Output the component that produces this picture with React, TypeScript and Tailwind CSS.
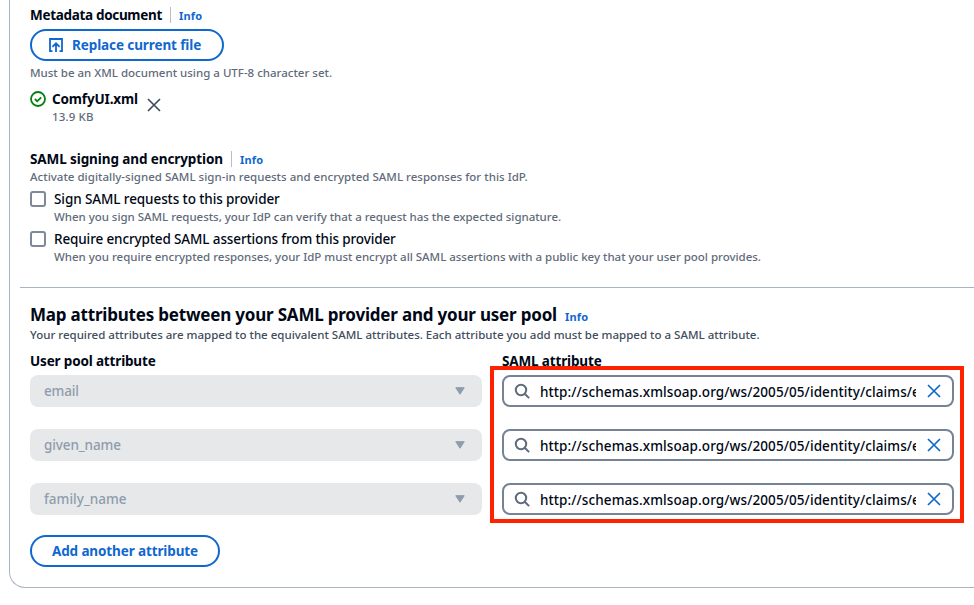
import type { ReactNode } from "react";

function CloseIcon({ className }: { className: string }) {
  return (
    <svg viewBox="0 0 16 16" className={className} fill="none" stroke="currentColor">
      <path d="M2 2l12 12M14 2L2 14" />
    </svg>
  );
}

function Checkbox({ label, hint, labelClass, hintClass }: { label: string; hint: string; labelClass: string; hintClass: string }) {
  return (
    <div className="flex h-10 gap-2">
      <span className="mt-0.5 size-4 shrink-0 rounded-[3px] border-2 border-[#7d8998] bg-white" />
      <div>
        <div className={`h-5 text-[13.5px] leading-5 font-medium text-[#000716] ${labelClass}`}>{label}</div>
        <div className={`h-4 text-[11.5px] leading-4 font-medium text-[#5f6b7a] ${hintClass}`}>{hint}</div>
      </div>
    </div>
  );
}

function Info({ className = "" }: { className?: string }) {
  return <a className={`text-[11px] font-bold tracking-[0.2px] text-[#0f67d0] ${className}`}>Info</a>;
}

function SectionTitle({ children, className }: { children: ReactNode; className: string }) {
  return (
    <div className="flex h-5 items-center">
      <span className={`text-[13.5px] leading-5 font-bold text-[#000716] ${className}`}>{children}</span>
      <span className="mx-2 h-4 w-px bg-[#b6bec9]" />
      <Info className="pt-0.5 leading-5" />
    </div>
  );
}

function AttributeRow({ name, nameClass }: { name: string; nameClass: string }) {
  return (
    <div className="flex h-8 gap-5">
      <div className="flex w-[452px] items-center justify-between rounded-lg bg-[#e6e8ea] pr-[17px] pl-3.5 text-[13.5px] font-medium text-[#8f9cad]">
        <span className={nameClass}>{name}</span>
        <svg viewBox="0 0 10 8" className="h-2 w-2.5" fill="currentColor" stroke="currentColor" strokeLinejoin="round">
          <path d="M.8.7h8.4L5 7.2z" />
        </svg>
      </div>
      <div className="flex w-[452px] items-center rounded-lg border-2 border-[#768394] bg-white pr-2.5 pl-2.5">
        <svg viewBox="0 0 16 16" className="size-4 shrink-0 text-[#5f6b7a]" fill="none" stroke="currentColor" strokeWidth="2">
          <circle cx="7" cy="7" r="5.2" />
          <path d="M10.7 10.7l4.4 4.4" />
        </svg>
        <div className="ml-2.5 w-[376px] overflow-hidden pt-0.5 text-[13.5px] font-medium tracking-[0.09px] whitespace-nowrap text-[#000716]">
          http://schemas.xmlsoap.org/ws/2005/05/identity/claims/emailaddress
        </div>
        <CloseIcon className="ml-2.5 size-4 shrink-0 stroke-[1.7] text-[#0f67d0]" />
      </div>
    </div>
  );
}

export default function App() {
  return (
    <div className="h-[605px] overflow-hidden bg-white font-['Noto_Sans',sans-serif]">
      <main className="ml-[9px] h-[588px] rounded-bl-2xl border-b border-l border-[#a9b4c2] pt-[5px]">
        <section className="pl-5">
          <SectionTitle className="tracking-[-0.32px]">Metadata document</SectionTitle>
          <button className="mt-1 flex h-8 w-[194px] items-center rounded-full border-2 border-[#0f67d0] pl-4 text-[13.5px] font-bold tracking-[-0.1px] text-[#0f67d0]">
            <svg viewBox="0 0 16 16" className="mr-2 size-4" fill="none" stroke="currentColor" strokeWidth="1.8">
              <path d="M4.5 14.2H2V2h12v12.2h-2.5M8 15V6.4M4.4 9.8L8 6.2l3.6 3.6" />
            </svg>
            Replace current file
          </button>
          <p className="mt-1 h-4 text-[11.5px] leading-4 font-medium text-[#5f6b7a]">
            Must be an XML document using a UTF-8 character set.
          </p>
          <div className="mt-2 flex h-9">
            <svg viewBox="0 0 16 16" className="mt-0.5 size-4 text-[#037f0c]" fill="none" stroke="currentColor" strokeWidth="1.8">
              <circle cx="8" cy="8" r="7" />
              <path d="M4.9 8l2.3 2.3 4-4" />
            </svg>
            <div className="ml-1.5 w-[86px] whitespace-nowrap">
              <div className="h-5 text-[13.5px] leading-5 font-bold tracking-[-0.14px] text-[#000716]">ComfyUI.xml</div>
              <div className="h-4 text-[11.5px] leading-4 font-medium tracking-[0.15px] text-[#5f6b7a]">13.9 KB</div>
            </div>
            <CloseIcon className="mt-2 ml-2 size-4 stroke-[1.7] text-[#414d5c]" />
          </div>
        </section>

        <section className="mt-6 pl-5">
          <SectionTitle className="tracking-[-0.1px]">SAML signing and encryption</SectionTitle>
          <p className="h-4 text-[11.5px] leading-4 font-medium tracking-[0.017px] text-[#5f6b7a]">
            Activate digitally-signed SAML sign-in requests and encrypted SAML responses for this IdP.
          </p>
          <div className="mt-1">
            <Checkbox
              label="Sign SAML requests to this provider"
              hint="When you sign SAML requests, your IdP can verify that a request has the expected signature."
              labelClass="tracking-[-0.095px]"
              hintClass="tracking-[-0.03px]"
            />
            <Checkbox
              label="Require encrypted SAML assertions from this provider"
              hint="When you require encrypted responses, your IdP must encrypt all SAML assertions with a public key that your user pool provides."
              labelClass="tracking-[-0.125px]"
              hintClass="tracking-[-0.018px]"
            />
          </div>
        </section>

        <hr className="mt-[18px] ml-2.5 border-[#a9b4c2]" />

        <section className="mt-[15px] pl-5">
          <div className="flex h-6 items-center">
            <h2 className="text-[17px] leading-6 font-bold tracking-[-0.2px] text-[#000716]">
              Map attributes between your SAML provider and your user pool
            </h2>
            <Info className="ml-2 pt-1" />
          </div>
          <p className="h-4 text-[11.5px] leading-4 font-medium tracking-[0.007px] text-[#414d5c]">
            Your required attributes are mapped to the equivalent SAML attributes. Each attribute you add must be mapped to a SAML attribute.
          </p>
          <div className="relative mt-2">
            <div className="flex h-5 gap-5 text-[13.5px] leading-5 font-bold text-[#000716]">
              <span className="w-[452px] tracking-[-0.16px]">User pool attribute</span>
              <span className="tracking-[-0.15px]">SAML attribute</span>
            </div>
            <div className="mt-1 flex flex-col gap-[22px]">
              <AttributeRow name="email" nameClass="tracking-[-0.15px]" />
              <AttributeRow name="given_name" nameClass="tracking-[-0.1px]" />
              <AttributeRow name="family_name" nameClass="tracking-[0.03px]" />
            </div>
            <div className="absolute top-[15px] left-[460px] h-[157px] w-[474px] border-4 border-[#ff2200]" />
          </div>
          <button className="mt-5 flex h-8 w-[190px] items-center justify-center rounded-full border-2 border-[#0f67d0] text-[13.5px] font-bold tracking-[-0.12px] text-[#0f67d0]">
            Add another attribute
          </button>
        </section>
      </main>
    </div>
  );
}
